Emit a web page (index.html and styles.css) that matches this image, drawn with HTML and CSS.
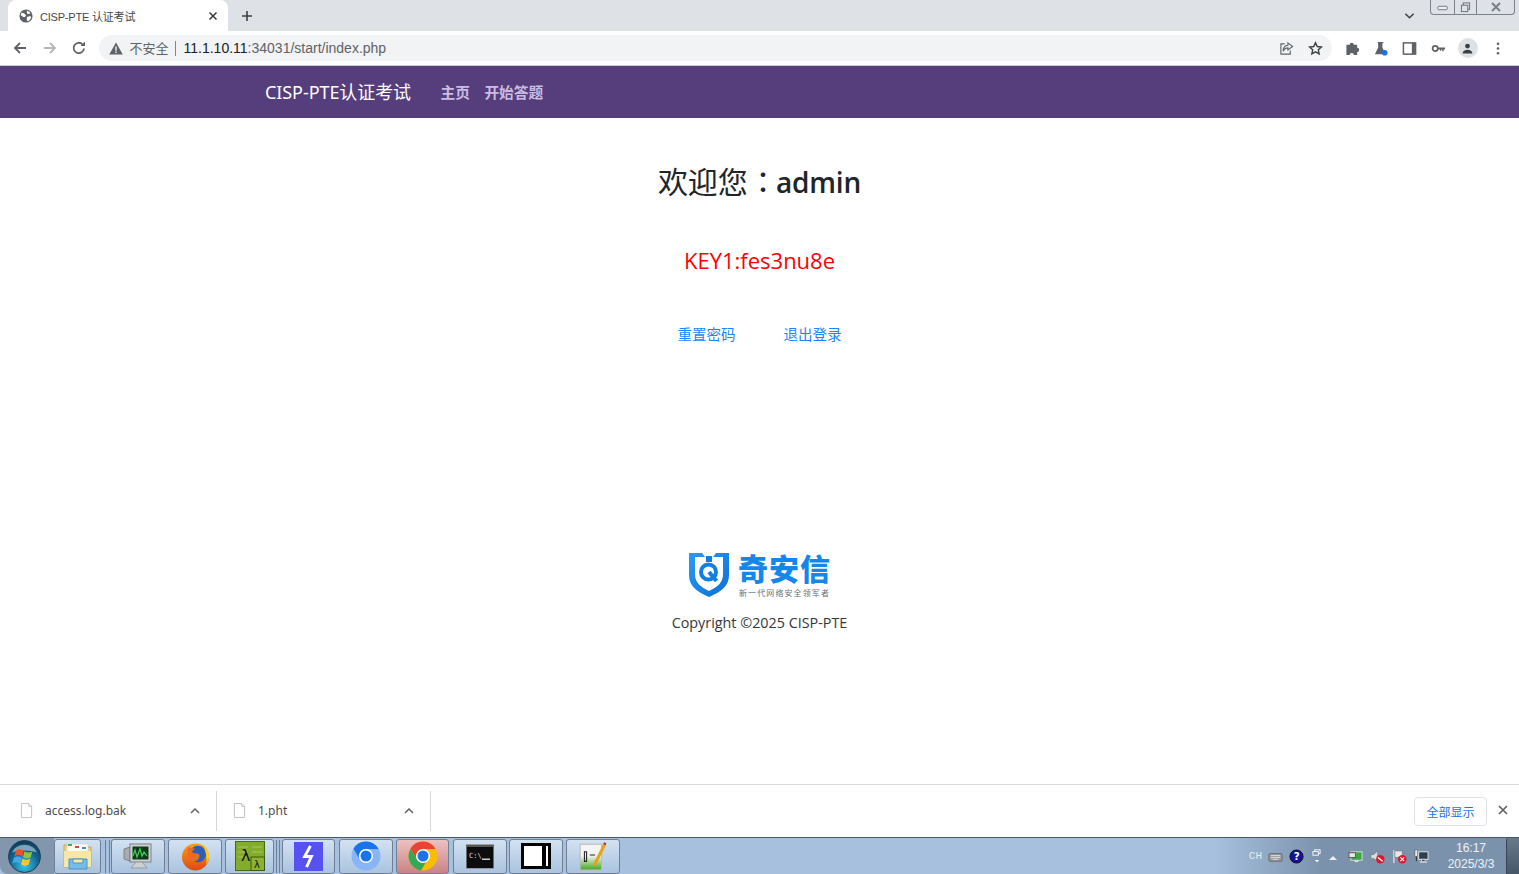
FILE: index.html
```html
<!DOCTYPE html>
<html lang="zh">
<head>
<meta charset="utf-8">
<title>CISP-PTE 认证考试</title>
<link rel="stylesheet" href="styles.css">
</head>
<body>
<div class="window">
  <div class="tabstrip">
    <div class="tab">
      <svg class="favicon" viewBox="0 0 16 16"><circle cx="8" cy="8" r="7.500" fill="#5f6368"/><path d="M3 4l3 1 2 2-1 2-2 0-3-2zM9 2l3 1 1 2-3 1-1-2zM9 9l4-1 1 2-3 4-2-1z" fill="#fff"/></svg>
      <span class="tab-title">CISP-PTE 认证考试</span>
      <svg class="tab-close" viewBox="0 0 10 10"><path d="M1.500 1.500l7 7M8.500 1.500l-7 7" stroke="#3c4043" stroke-width="1.600"/></svg>
    </div>
    <svg class="newtab" viewBox="0 0 12 12"><path d="M6 1v10M1 6h10" stroke="#3c4043" stroke-width="1.600"/></svg>
    <div class="strip-spacer"></div>
    <svg class="tab-search" viewBox="0 0 12 8"><path d="M1.500 1.500L6 6l4.500-4.500" fill="none" stroke="#3c4043" stroke-width="1.600"/></svg>
    <div class="wincontrols">
      <div class="wc wc-min"><svg viewBox="0 0 14 6"><rect x="1" y="1" width="11" height="4" rx="1" fill="#eceef1" stroke="#666b72"/></svg></div>
      <div class="wc wc-max"><svg viewBox="0 0 12 12"><rect x="3.500" y="1" width="7" height="7" fill="none" stroke="#666b72"/><rect x="1.500" y="3.500" width="7" height="7" fill="#dee1e6" stroke="#666b72"/></svg></div>
      <div class="wc wc-close"><svg viewBox="0 0 12 10"><path d="M2 1l8 8M10 1L2 9" stroke="#7b8087" stroke-width="2"/></svg></div>
    </div>
  </div>

  <div class="toolbar">
    <svg class="nav-ic" viewBox="0 0 16 16"><path d="M14 8H3M8 3L3 8l5 5" fill="none" stroke="#5f6368" stroke-width="1.800"/></svg>
    <svg class="nav-ic nav-ic-off" viewBox="0 0 16 16"><path d="M2 8h11M8 3l5 5-5 5" fill="none" stroke="#b3b6ba" stroke-width="1.800"/></svg>
    <svg class="nav-ic" viewBox="0 0 16 16"><path d="M13 8.500A5.200 5.200 0 1 1 11.500 4.300" fill="none" stroke="#5f6368" stroke-width="1.800"/><path d="M9.500 6H14V1.500z" fill="#5f6368"/></svg>
    <div class="omnibox">
      <svg class="warn" viewBox="0 0 14 13"><path d="M7 .5L13.800 12.500H.2z" fill="#5f6368"/><path d="M6.300 4.500h1.400v4.200H6.300zM6.300 9.600h1.400v1.300H6.300z" fill="#f1f3f4"/></svg>
      <span class="insecure">不安全</span>
      <span class="divider"></span>
      <span class="url"><b>11.1.10.11</b>:34031/start/index.php</span>
      <span class="omni-spacer"></span>
      <svg class="omni-ic" viewBox="0 0 16 16"><path d="M6 3H2v11h10v-4" fill="none" stroke="#5f6368" stroke-width="1.200"/><path d="M9.500 2l5 3.800-5 3.700V7.300C7 7.300 5.500 8.500 4.500 11c0-4 2-6.300 5-6.500z" fill="none" stroke="#5f6368" stroke-width="1.200"/></svg>
      <svg class="omni-ic omni-star" viewBox="0 0 16 16"><path d="M8 1.800l1.900 4.100 4.400.5-3.300 3 .9 4.400L8 11.600l-3.900 2.200.9-4.400-3.300-3 4.400-.5z" fill="none" stroke="#3c4043" stroke-width="1.500"/></svg>
    </div>
    <svg class="tool-ic tool-first" viewBox="0 0 16 16"><path d="M1.500 4h3.500a2.200 2.200 0 1 1 4.400 0h3.600v3.300a2.200 2.200 0 1 1 0 4.400V15H9.400a2.200 2.200 0 1 0-4.400 0H1.500z" fill="#5f6368"/></svg>
    <svg class="tool-ic tool-flask" viewBox="0 0 16 16"><path d="M5 1h6v1.300h-1V7l3.500 7H2l3.500-7V2.300H5z" fill="#5f6368"/><circle cx="12.500" cy="12.500" r="3" fill="#1a73e8"/></svg>
    <svg class="tool-ic" viewBox="0 0 16 16"><rect x="1.500" y="2" width="13" height="12" fill="#fff" stroke="#5f6368" stroke-width="1.600"/><rect x="10.500" y="2" width="4" height="12" fill="#5f6368"/></svg>
    <svg class="tool-ic" viewBox="0 0 16 16"><circle cx="4.500" cy="8" r="2.800" fill="none" stroke="#5f6368" stroke-width="1.800"/><path d="M7 7h8v2h-1.500v2H12V9h-1v1.500H9.500V9H7z" fill="#5f6368"/></svg>
    <div class="avatar"><svg viewBox="0 0 16 16"><circle cx="8" cy="5" r="3" fill="#3c4043"/><path d="M2 14c0-3 3-4.500 6-4.500s6 1.500 6 4.500z" fill="#3c4043"/></svg></div>
    <svg class="tool-ic kebab" viewBox="0 0 4 16"><circle cx="2" cy="3" r="1.400" fill="#5f6368"/><circle cx="2" cy="8" r="1.400" fill="#5f6368"/><circle cx="2" cy="13" r="1.400" fill="#5f6368"/></svg>
  </div>

  <nav class="navbar">
    <a class="brand">CISP-PTE认证考试</a>
    <a class="navlink">主页</a>
    <a class="navlink">开始答题</a>
  </nav>

  <main class="content">
    <h1 class="welcome">欢迎您<span class="colon">：</span><span class="user">admin</span></h1>
    <p class="key">KEY1:fes3nu8e</p>
    <div class="links"><a>重置密码</a><a>退出登录</a></div>
    <div class="logo">
      <svg class="shield" viewBox="0 0 40 44">
        <defs><linearGradient id="sg" x1="0" y1="0" x2="1" y2="1"><stop offset="0" stop-color="#2a9bf4"/><stop offset="1" stop-color="#0b6fd6"/></linearGradient></defs>
        <path d="M0 0h13l3 4H6v17c0 9 6 13 14 17 8-4 14-8 14-17V4H24l3-4h13v22c0 11-8 17-20 22C8 39 0 33 0 22z" fill="url(#sg)"/>
        <path d="M17 3h6v6h-6z" fill="#0f7fe4"/>
        <circle cx="19.500" cy="19" r="7.500" fill="none" stroke="#0f7fe4" stroke-width="4"/>
        <path d="M20 19l7.500 9" stroke="#0f7fe4" stroke-width="4"/>
      </svg>
      <div class="logo-text">
        <div class="logo-cn">奇安信</div>
        <div class="logo-sub">新一代网络安全领军者</div>
      </div>
    </div>
    <p class="copyright">Copyright ©2025 CISP-PTE</p>
  </main>

  <div class="downloads">
    <div class="dl-item dl-first">
      <svg class="file" viewBox="0 0 14 16"><path d="M1.500.5h8l3 3v12h-11z" fill="#fff" stroke="#bdbdbd"/><path d="M9.500.5v3h3" fill="#eee" stroke="#bdbdbd"/></svg>
      <span class="dl-name">access.log.bak</span>
      <svg class="caret" viewBox="0 0 10 6"><path d="M1 5l4-4 4 4" fill="none" stroke="#5f6368" stroke-width="1.500"/></svg>
    </div>
    <div class="dl-item">
      <svg class="file" viewBox="0 0 14 16"><path d="M1.500.5h8l3 3v12h-11z" fill="#fff" stroke="#bdbdbd"/><path d="M9.500.5v3h3" fill="#eee" stroke="#bdbdbd"/></svg>
      <span class="dl-name">1.pht</span>
      <svg class="caret" viewBox="0 0 10 6"><path d="M1 5l4-4 4 4" fill="none" stroke="#5f6368" stroke-width="1.500"/></svg>
    </div>
    <div class="dl-spacer"></div>
    <button class="showall">全部显示</button>
    <svg class="dl-close" viewBox="0 0 10 10"><path d="M1 1l8 8M9 1L1 9" stroke="#5f6368" stroke-width="1.700"/></svg>
  </div>

  <div class="taskbar">
    <div class="start"><svg viewBox="0 0 34 34"><defs><radialGradient id="orb" cx=".5" cy=".8" r=".8"><stop offset="0" stop-color="#38c4e8"/><stop offset=".6" stop-color="#10608c"/><stop offset="1" stop-color="#0d3a56"/></radialGradient></defs><circle cx="17" cy="17" r="16.500" fill="url(#orb)" stroke="#243c50"/><path d="M4 13a13.500 11 0 0 1 26 0c-7-3-19-3-26 0z" fill="#cfe6f2" opacity=".55"/><path d="M8 11c3-2 5-2 8 0l-1.500 6c-3-2-5-2-8 0z" fill="#e8542f"/><path d="M17 11.500c3 2 5 2 8 0l-1.500 6c-3 2-5 2-8 0z" fill="#8cc63f"/><path d="M6 18.500c3-2 5-2 8 0l-1.500 6c-3-2-5-2-8 0z" fill="#45a8e6"/><path d="M15 19c3 2 5 2 8 0l-1.500 6c-3 2-5 2-8 0z" fill="#f8c92e"/></svg></div>
    <div class="tb tb-a"><svg viewBox="0 0 30 30"><path d="M1 4h11l2 2h14v20H1z" fill="#e8d382" stroke="#c2aa5c"/><rect x="4" y="3" width="21" height="8" fill="#fbfbf6" stroke="#cfcfcf" stroke-width=".6"/><rect x="5" y="3" width="4" height="2" fill="#46b04a"/><rect x="12" y="5" width="4" height="2" fill="#d84b3a"/><rect x="19" y="6" width="4" height="2" fill="#3c8fdc"/><path d="M1 10h27v16H1z" fill="#f6e7a6"/><path d="M6 18h18v10H6z" fill="#74bde8" stroke="#4a93c6"/><path d="M10 18h10v4H10z" fill="#f6e7a6" stroke="#4a93c6"/></svg></div>
    <div class="grip grip-a"></div>
    <div class="tb tb-b"><svg viewBox="0 0 30 30"><path d="M1 8l6-2v14l-6-2z" fill="#a9acae" stroke="#808386"/><rect x="7" y="3" width="21" height="18" fill="#cfd2d4" stroke="#7d8084"/><rect x="9.500" y="5.500" width="16" height="13" fill="#0e3a1c"/><path d="M10 15l2-6 2 7 3-8 2 7 2-4 3 4" fill="none" stroke="#40d050" stroke-width="1.200"/><path d="M8 27l5-6h6l5 6z" fill="#cfd2d4" stroke="#999"/></svg></div>
    <div class="tb tb-c"><svg viewBox="0 0 30 30"><defs><linearGradient id="ff" x1="0" y1="0" x2="0" y2="1"><stop offset="0" stop-color="#f6a01c"/><stop offset="1" stop-color="#de4a17"/></linearGradient></defs><circle cx="15" cy="15.500" r="14" fill="url(#ff)"/><circle cx="17.500" cy="12.500" r="8.500" fill="#2c5fb8"/><path d="M8 5c1 2 4 1 7 2-3 1-4 3-3 4 2 1 5 0 7 2 1 4-3 8-7 7-4 0-6-5-5-9-1-2 0-4 1-6z" fill="#ee6a1c"/><path d="M22 2c5 3 7 8 7 13 0 3-1 6-3 8 1-6 0-14-4-21z" fill="#fbc82c"/></svg></div>
    <div class="tb tb-d"><svg viewBox="0 0 30 30"><rect x=".5" y=".5" width="29" height="29" fill="#84ac2c" stroke="#4a6a16"/><path d="M3 6h10M17 6h10M3 11h10M17 11h10M3 16h10" stroke="#a9c85a"/><rect x="16" y="16" width="13.500" height="13.500" fill="#8cb32f" stroke="#3d5812"/><text x="6" y="20" class="lam-big">λ</text><text x="19" y="27" class="lam-small">λ</text></svg></div>
    <div class="grip grip-b"></div>
    <div class="tb tb-e"><svg viewBox="0 0 30 30"><rect width="30" height="30" fill="#5651f0"/><path d="M17 4l-6 11h7l-5 11" fill="none" stroke="#fff" stroke-width="3"/></svg></div>
    <div class="tb tb-f"><svg viewBox="0 0 30 30"><circle cx="15" cy="15" r="14.500" fill="#8ab4f8"/><path d="M15 .5A14.500 14.500 0 0 0 2.500 7.700l6.300 10.800A7 7 0 0 1 15 8h12.500A14.500 14.500 0 0 0 15 .5z" fill="#1a73e8"/><circle cx="15" cy="15" r="7" fill="#fff"/><circle cx="15" cy="15" r="5.500" fill="#1a73e8"/></svg></div>
    <div class="tb tb-g"><svg viewBox="0 0 30 30"><circle cx="15" cy="15" r="14.500" fill="#fbbc04"/><path d="M15 .5A14.500 14.500 0 0 0 2.500 7.700l6.500 11L15 8h12.500A14.500 14.500 0 0 0 15 .5z" fill="#ea4335"/><path d="M2.500 7.700A14.500 14.500 0 0 0 13 29.400l6.500-10.900H9z" fill="#34a853"/><circle cx="15" cy="15" r="7" fill="#fff"/><circle cx="15" cy="15" r="5.500" fill="#1a73e8"/></svg></div>
    <div class="tb tb-h"><svg viewBox="0 0 28 24"><rect x=".25" y=".25" width="27.500" height="23.500" fill="#0c0c0c" stroke="#999" stroke-width=".5"/><rect x=".5" y=".5" width="27" height="2" fill="#555"/><text x="3" y="13" class="cmd">C:\</text><rect x="16" y="14" width="8" height="1.500" fill="#ccc"/></svg></div>
    <div class="tb tb-i"><svg viewBox="0 0 30 26"><rect x="1.500" y="1.500" width="27" height="23" fill="#fff" stroke="#000" stroke-width="3"/><rect x="21" y="3" width="4" height="20" fill="#000"/></svg></div>
    <div class="tb tb-j"><svg viewBox="0 0 28 28"><defs><linearGradient id="pg" x1="0" y1="0" x2="0" y2="1"><stop offset=".45" stop-color="#f4f4f4"/><stop offset="1" stop-color="#40a818"/></linearGradient></defs><rect x="2" y="3" width="20" height="24" fill="url(#pg)" stroke="#bbb"/><path d="M6 10h2v9H6zM11 13h5" fill="none" stroke="#222"/><path d="M15 23L25 3" stroke="#e9a21c" stroke-width="3"/><path d="M24 2l2 1" stroke="#b03030" stroke-width="2"/></svg></div>
    <div class="tb-spacer"></div>
    <div class="tray">
      <span class="ime">CH</span>
      <svg class="tray-ic tray-kb" viewBox="0 0 16 12"><rect x="1" y="3" width="14" height="8" rx="1" fill="#9a9ea3" stroke="#666"/><path d="M3 5h10M3 7h10M5 9h6" stroke="#ddd"/></svg>
      <svg class="tray-ic tray-help" viewBox="0 0 16 16"><circle cx="8" cy="8" r="7" fill="#12129a" stroke="#111"/><text x="5" y="12" class="help">?</text></svg>
      <div class="tray-stack"><svg viewBox="0 0 10 7"><rect x="3" y=".5" width="6" height="4" fill="none" stroke="#fff"/><rect x="1" y="2.500" width="6" height="4" fill="#7d93ad" stroke="#fff"/></svg><svg viewBox="0 0 6 4"><path d="M0 0h6L3 3z" fill="#fff"/></svg></div>
      <svg class="tray-up" viewBox="0 0 8 5"><path d="M0 5l4-4 4 4z" fill="#eef"/></svg>
      <svg class="tray-ic" viewBox="0 0 16 16"><rect x="3" y="3" width="12" height="9" fill="#3ca845" stroke="#ddd"/><path d="M7 12v2h4v-2z" fill="#ddd"/><rect x="1" y="4" width="7" height="5" fill="#e8e8e8" stroke="#555"/></svg>
      <svg class="tray-ic" viewBox="0 0 16 16"><path d="M1 6h3l4-4v11L4 10H1z" fill="#ddd" stroke="#666" stroke-width=".5"/><circle cx="11" cy="11" r="4.500" fill="#d81a2a"/><path d="M8.500 9l5 4" stroke="#fff" stroke-width="1.500"/></svg>
      <svg class="tray-ic" viewBox="0 0 16 16"><path d="M2 1v14" stroke="#ddd" stroke-width="1.500"/><path d="M3 2h8v7H3z" fill="#e8e8e8" stroke="#555" stroke-width=".5"/><circle cx="11" cy="11" r="4.500" fill="#d81a2a"/><path d="M9 9l4 4M13 9l-4 4" stroke="#fff" stroke-width="1.300"/></svg>
      <svg class="tray-ic" viewBox="0 0 16 16"><rect x="5" y="3" width="10" height="8" fill="#2c3e50" stroke="#e8e8e8"/><path d="M8 11v2h4v-2zM6 14h8" stroke="#e8e8e8"/><rect x="1" y="1" width="3" height="7" fill="#e8e8e8" stroke="#444" stroke-width=".5"/><path d="M2.500 8v5" stroke="#222"/></svg>
      <div class="clock"><span>16:17</span><span>2025/3/3</span></div>
    </div>
    <div class="showdesk"></div>
  </div>
</div>
</body>
</html>
```

FILE: styles.css
```css
* { box-sizing: border-box; }
html, body { margin: 0; padding: 0; height: 100%; overflow: hidden; }
body { font-family: "Open Sans", "Noto Sans CJK SC", sans-serif; background: #fff; color: #212529; }
svg { display: block; flex: none; }
.window { display: flex; flex-direction: column; height: 874px; width: 1519px; }

.tabstrip { height: 31px; background: #dee1e6; display: flex; align-items: flex-end; padding-left: 8px; flex: none; }
.tab { width: 220px; height: 31px; background: #fff; border-radius: 8px 8px 0 0; display: flex; align-items: center; padding: 0 11px; }
.favicon { width: 14px; height: 14px; margin-right: 7px; }
.tab-title { font-family: "Liberation Sans", "Noto Sans CJK SC", sans-serif; font-size: 11px; letter-spacing: -.2px; color: #45474a; flex: 1; white-space: nowrap; }
.tab-close { width: 10px; height: 10px; margin-right: -1px; }
.newtab { width: 12px; height: 12px; margin: 0 0 9px 13px; }
.strip-spacer { flex: 1; }
.tab-search { width: 11px; height: 8px; margin: 0 15px 11px 0; }
.wincontrols { display: flex; align-self: flex-start; height: 15px; width: 85px; border: 1px solid #7d8289; border-top: 0; border-radius: 0 0 4px 4px; margin-right: 4px; }
.wc { display: flex; align-items: center; justify-content: center; border-right: 1px solid #7d8289; }
.wc-min { width: 24px; }
.wc-min svg { width: 12px; height: 6px; margin-top: 2px; }
.wc-max { width: 22px; }
.wc-max svg { width: 11px; height: 11px; }
.wc-close { flex: 1; border-right: 0; }
.wc-close svg { width: 12px; height: 10px; }

.toolbar { height: 35px; background: #fff; border-bottom: 1px solid #c9ccd1; display: flex; align-items: center; padding-left: 12px; flex: none; }
.nav-ic { width: 16px; height: 16px; margin-right: 13.500px; }
.omnibox { height: 26px; width: 1233px; margin-left: -2px; background: #f1f3f4; border-radius: 13px; display: flex; align-items: center; padding: 0 8px 0 10px; }
.warn { width: 14px; height: 13px; margin-right: 7px; }
.insecure { font-family: "Noto Sans CJK SC", sans-serif; font-size: 13px; color: #5f6368; line-height: 1; margin-top: -2px; }
.divider { width: 1px; height: 15px; background: #80868b; margin: 0 8px 0 6px; }
.url { font-family: "Liberation Sans", sans-serif; font-size: 14px; color: #5f6368; white-space: nowrap; }
.url b { font-weight: 400; color: #202124; }
.omni-spacer { flex: 1; }
.omni-ic { width: 15px; height: 15px; margin-left: 15px; }
.omni-star { margin-right: 1px; margin-left: 14px; }
.tool-ic { width: 15px; height: 15px; margin-left: 14px; }
.tool-first { margin-left: 13px; }
.tool-flask { margin-left: 13px; }
.avatar { width: 20px; height: 20px; border-radius: 50%; background: #dee1e6; margin-left: 12px; display: flex; align-items: center; justify-content: center; flex: none; }
.avatar svg { width: 13px; height: 13px; }
.kebab { width: 4px; margin-left: 18px; }

.navbar { height: 52px; background: #563d7c; display: flex; align-items: center; padding: 0 0 2px 265px; flex: none; }
.brand { font-family: "Noto Sans", "Noto Sans CJK SC", sans-serif; font-size: 18px; color: #fff; margin-right: 29.500px; letter-spacing: -.08px; white-space: nowrap; }
.navlink { font-family: "Noto Sans CJK SC", sans-serif; font-weight: 700; font-size: 14.700px; color: #cbbde2; margin-right: 14.500px; white-space: nowrap; }

.content { flex: 1; display: flex; flex-direction: column; align-items: center; min-height: 0; }
.welcome { margin: 38px 0 0; font-size: 30px; font-weight: 400; line-height: 48px; color: #212529; font-family: "Noto Sans CJK SC", sans-serif; display: flex; align-items: baseline; white-space: nowrap; }
.colon { font-family: "Noto Sans CJK TC", sans-serif; width: 28px; }
.user { font-family: "Open Sans", sans-serif; font-weight: 600; font-size: 28px; letter-spacing: -.15px; }
.key { margin: 38px 0 0; font-size: 22px; line-height: 32px; color: #ff0000; font-family: "Open Sans", sans-serif; }
.links { margin-top: 47px; display: flex; gap: 48px; font-size: 14.500px; line-height: 22px; color: #1a85ff; font-family: "Noto Sans CJK SC", sans-serif; }
.logo { margin-top: 208px; display: flex; align-items: flex-start; gap: 9px; width: 141px; height: 44px; }
.shield { width: 40px; height: 44px; }
.logo-text { display: flex; flex-direction: column; align-items: center; }
.logo-cn { font-family: "Noto Sans CJK SC", sans-serif; font-weight: 900; font-size: 30px; line-height: 32px; margin-top: -2px; color: #1388ea; letter-spacing: 1px; white-space: nowrap; }
.logo-sub { font-family: "Noto Sans CJK SC", sans-serif; font-size: 8px; line-height: 10px; margin-top: 5px; color: #6b6f73; letter-spacing: 1.100px; white-space: nowrap; }
.copyright { margin: 15px 0 0; font-size: 14.350px; line-height: 22px; color: #33373b; white-space: nowrap; }

.downloads { height: 53px; border-top: 1px solid #d9dadc; background: #fff; display: flex; align-items: center; flex: none; padding-right: 12px; }
.dl-item { width: 214px; height: 40px; padding-left: 16px; padding-right: 17px; display: flex; align-items: center; border-right: 1px solid #d5d7da; }
.dl-first { width: 217px; padding-left: 20px; }
.file { width: 13px; height: 15px; margin-right: 12px; margin-top: -2px; }
.dl-name { font-family: "Noto Sans", sans-serif; font-size: 12px; color: #4a4c4f; flex: 1; white-space: nowrap; margin-top: -1px; }
.caret { width: 10px; height: 6px; margin-right: -1px; }
.dl-spacer { flex: 1; }
.showall { width: 73px; height: 29px; border: 1px solid #e0e2e5; border-radius: 4px; background: #fff; color: #1a73e8; font-family: "Noto Sans CJK SC", sans-serif; font-size: 12px; padding: 0; margin-right: 11px; }
.dl-close { width: 10px; height: 10px; margin-right: -1px; margin-top: -2px; }

.taskbar { height: 37px; flex: none; display: flex; align-items: center; background: linear-gradient(90deg, #a6c0de 0, #a6c0de 80%, #7b92ac 87%, #7b92ac 100%); border-top: 1px solid #4a5763; }
.start { width: 54px; height: 36px; background: #8296ad; border-radius: 0 0 0 8px; display: flex; align-items: center; padding-left: 8px; flex: none; }
.start svg { width: 33px; height: 33px; }
.tb { height: 35px; width: 54px; border: 1px solid #6f8095; border-radius: 3px; background: linear-gradient(180deg, #d3e2f1, #a9c3df); display: flex; align-items: center; justify-content: center; margin-right: 3px; flex: none; }
.tb svg { width: 30px; height: 30px; }
.tb-a { width: 47px; margin-right: 4px; }
.tb-b { margin-right: 3px; }
.tb-c svg { width: 29px; height: 29px; }
.tb-d { width: 49px; margin-right: 2px; }
.tb-e { width: 53px; margin-right: 4px; }
.tb-e svg { width: 29px; height: 29px; }
.tb-g { background: linear-gradient(180deg, #eec0c0, #c98484); width: 53px; margin-right: 4px; }
.tb-h { margin-right: 2px; }
.tb-h svg { height: 25px; width: 28px; }
.tb-i svg { width: 30px; height: 26px; }
.grip { width: 4px; height: 33px; border-left: 1px solid #6f8095; border-right: 1px solid #6f8095; flex: none; }
.grip-a { width: 5px; margin-right: 1px; }
.grip-b { margin-right: 2px; }
.tb-spacer { flex: 1; }
.lam-big { font-family: "DejaVu Sans", sans-serif; font-size: 16px; fill: #111; }
.lam-small { font-family: "DejaVu Sans", sans-serif; font-size: 10px; fill: #111; }
.cmd { font-family: "DejaVu Sans Mono", monospace; font-size: 7px; fill: #ddd; }
.help { font-family: "DejaVu Sans", sans-serif; font-size: 11px; font-weight: 700; fill: #fff; }
.tray { display: flex; align-items: center; color: #eef2f7; }
.ime { font-family: "Liberation Mono", monospace; font-size: 11px; margin-right: 6px; color: #e6ebf0; }
.tray-ic { width: 15px; height: 15px; margin-right: 7px; }
.tray-kb { margin-right: 6px; }
.tray-help { margin-right: 6px; }
.tray-stack { display: flex; flex-direction: column; align-items: center; gap: 4px; margin: 0 8px 0 2px; }
.tray-stack svg:first-child { width: 9px; height: 7px; }
.tray-stack svg:last-child { width: 6px; height: 3px; }
.tray-up { width: 8px; height: 5px; margin-right: 11px; margin-top: 2px; }
.clock { display: flex; flex-direction: column; align-items: center; font-family: "Liberation Sans", sans-serif; font-size: 12px; line-height: 16px; width: 50px; margin: 0 10px; color: #eef2f7; }
.showdesk { width: 13px; height: 36px; background: linear-gradient(180deg, #69798c, #46576a); border-left: 1px solid #3a4655; border-radius: 2px 0 0 0; }
```
